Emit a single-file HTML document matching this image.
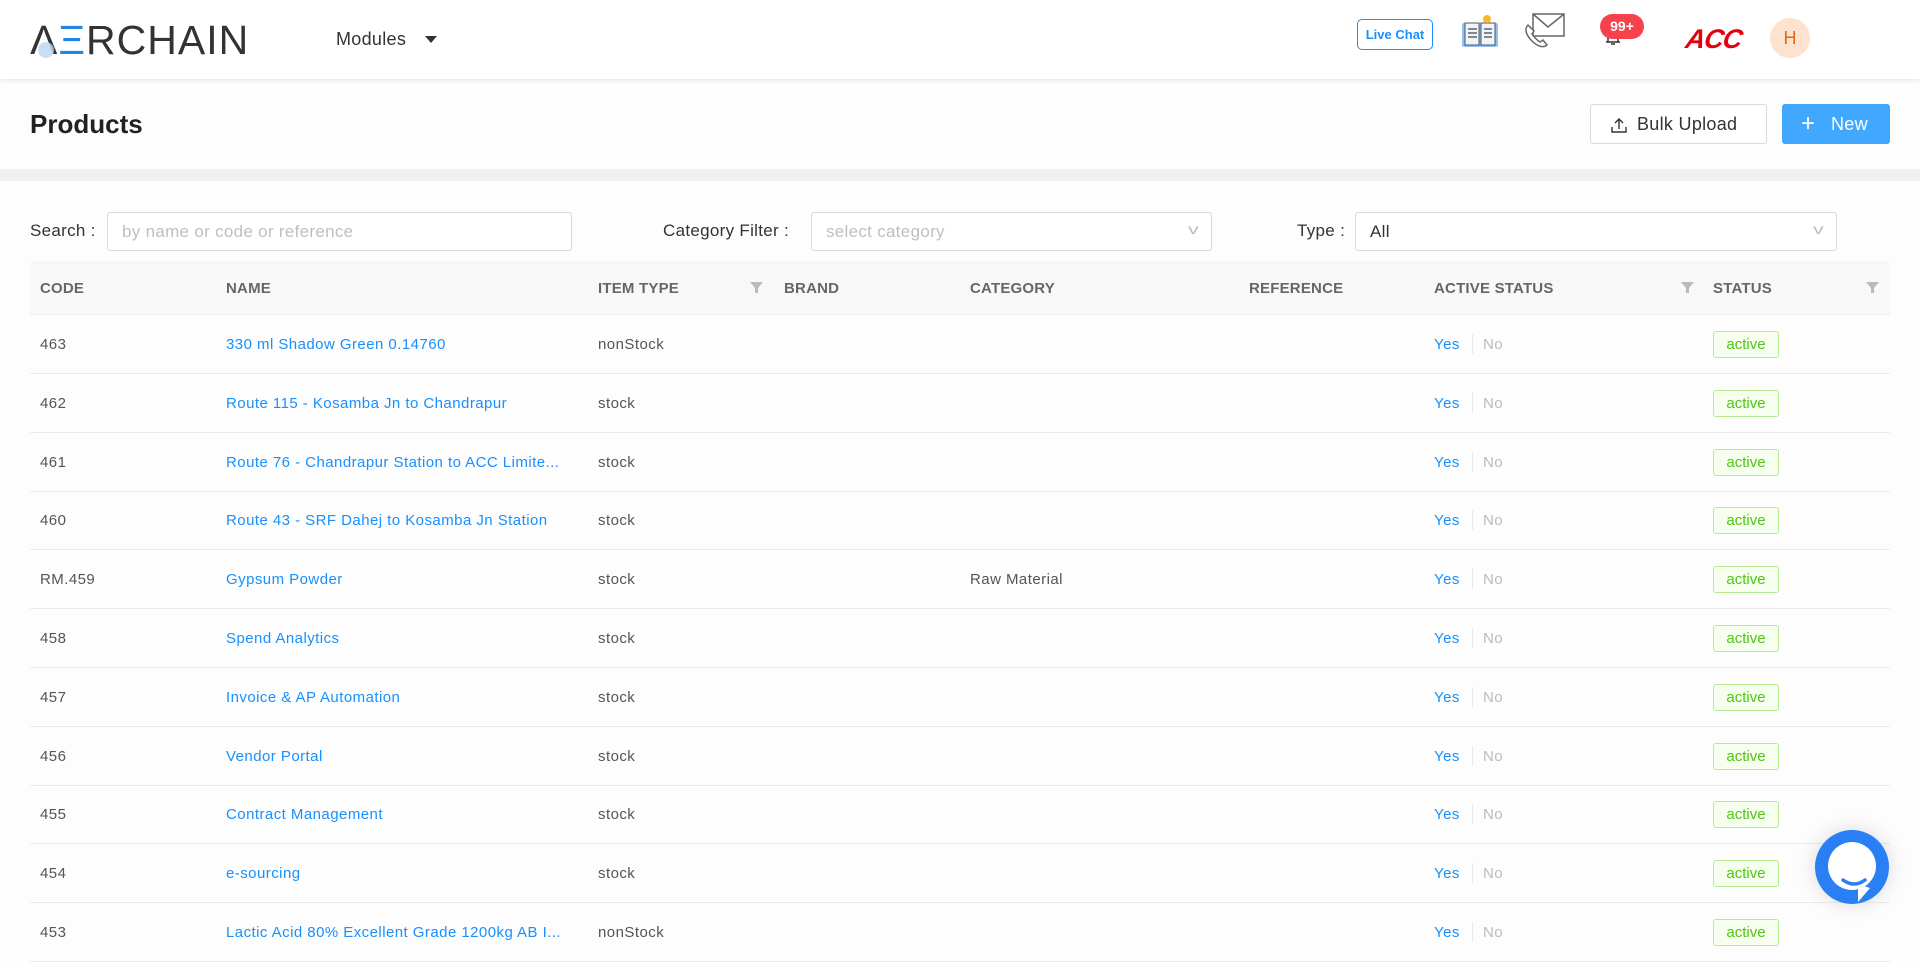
<!DOCTYPE html>
<html><head><meta charset="utf-8"><style>
*{box-sizing:border-box;margin:0;padding:0}
body{width:1920px;height:936px;overflow:hidden;background:#fdfdfd;font-family:"Liberation Sans",sans-serif;color:#333;position:relative}
.hdr{position:absolute;left:0;top:0;width:1920px;height:79px;background:#fff;box-shadow:0 2px 4px rgba(0,0,0,.08)}
.abs{position:absolute}
.band{position:absolute;left:0;top:169px;width:1920px;height:12px;background:#f0f0f0}
.lbl{position:absolute;font-size:17px;color:#333;top:221px;letter-spacing:.3px}
.inp{position:absolute;top:212px;height:39px;border:1px solid #d9d9d9;border-radius:3px;background:#fff;font-size:17px;padding:9px 14px;color:#bfbfbf;letter-spacing:.3px}
.chev{position:absolute;right:14px;top:8px;color:#bbb;font-size:14px;transform:scaleX(1.5)}
.th{position:absolute;left:30px;top:261px;width:1860px;height:54px;background:#f8f8f9;border-bottom:1px solid #eee}
.th span{position:absolute;top:19px;font-size:15px;font-weight:bold;color:#666;letter-spacing:.2px}
.row{position:absolute;left:30px;width:1860px;height:59px;border-bottom:1px solid #ececec}
.row span{position:absolute;top:21px;font-size:15px;color:#555;letter-spacing:.45px}
.row .nm{color:#1890ff}
.tag{position:absolute;left:1683px;top:16px;width:66px;height:27px;border:1px solid #b7eb8f;background:#f6ffed;color:#52c41a;border-radius:3px;font-size:15px;text-align:center;line-height:25px}
.fi{position:absolute;top:20px;width:13px;height:13px}
</style></head><body>
<div class="hdr">
  <div class="abs" style="left:30px;top:20px;font-size:41px;letter-spacing:1px;color:#333;line-height:40px">Λ<span style="color:#1e88e5">Ξ</span>RCHAIN</div>
  <div class="abs" style="left:38px;top:42px;width:16px;height:16px;border-radius:50%;background:#bcd6f2;opacity:.8"></div>
  <div class="abs" style="left:336px;top:29px;font-size:18px;color:#333;letter-spacing:.3px">Modules</div>
  <div class="abs" style="left:425px;top:36px;width:0;height:0;border-left:6px solid transparent;border-right:6px solid transparent;border-top:7px solid #333"></div>
  <div class="abs" style="left:1357px;top:19px;width:76px;height:31px;border:1px solid #1890ff;border-radius:5px;color:#1890ff;font-size:13px;font-weight:bold;text-align:center;line-height:29px">Live Chat</div>
  <svg class="abs" style="left:1460px;top:11px" width="40" height="38" viewBox="0 0 40 38"><rect x="2" y="12" width="36" height="24" rx="2" fill="#8fc1f5"/><path d="M5 12h14v22H5z M21 12h14v22H21z" fill="#eef5fd" stroke="#555" stroke-width="1"/><path d="M8 18h9M8 22h9M8 26h9M24 18h8M24 22h8M24 26h8" stroke="#444" stroke-width="1.3"/><circle cx="27" cy="8" r="4" fill="#f5b82e"/></svg>
  <svg class="abs" style="left:1524px;top:13px" width="42" height="36" viewBox="0 0 42 36"><rect x="9" y="1" width="31" height="22" fill="#fff" stroke="#666" stroke-width="1.5"/><path d="M9 1l15 13 16-13" fill="none" stroke="#666" stroke-width="1.5"/><path d="M4 12c-4 4-2 10 4 16 6 6 12 7 15 4l-4-5-3 2c-3-2-6-5-8-8l2-3-5-5z" fill="#fff" stroke="#666" stroke-width="1.5"/></svg>
  <svg class="abs" style="left:1605px;top:28px" width="16" height="20" viewBox="0 0 16 20"><path d="M3 14V8a5 5 0 0110 0v6h2H1z M6 16h4" fill="none" stroke="#333" stroke-width="1.5"/></svg>
  <div class="abs" style="left:1600px;top:14px;width:44px;height:25px;border-radius:13px;background:#f5424d;color:#fff;font-size:14px;font-weight:bold;text-align:center;line-height:25px">99+</div>
  <div class="abs" style="left:1686px;top:24px;font-size:27px;font-weight:bold;font-style:italic;color:#e3000f;letter-spacing:-1px;transform:skewX(-10deg)">ACC</div>
  <div class="abs" style="left:1770px;top:18px;width:40px;height:40px;border-radius:50%;background:#fde3cf;color:#e06a1b;font-size:18px;text-align:center;line-height:40px">H</div>
</div>
<div class="abs" style="left:30px;top:109px;font-size:26px;font-weight:bold;color:#222">Products</div>
<div class="abs" style="left:1590px;top:104px;width:177px;height:40px;border:1px solid #d9d9d9;border-radius:3px;background:#fff;font-size:18px;line-height:38px;padding-left:46px;color:#333;letter-spacing:.3px">Bulk Upload</div>
<svg class="abs" style="left:1611px;top:117px" width="16" height="16" viewBox="0 0 16 16"><path d="M8 12V2M4 6l4-4 4 4M1 10v5h14v-5" fill="none" stroke="#333" stroke-width="1.4"/></svg>
<div class="abs" style="left:1782px;top:104px;width:108px;height:40px;border-radius:3px;background:#40a9ff;color:#fff;font-size:18px;line-height:40px;padding-left:49px;letter-spacing:.3px">New</div>
<div class="abs" style="left:1801px;top:112px;color:#fff;font-size:24px;line-height:24px">+</div>
<div class="band"></div>
<div class="lbl" style="left:30px">Search :</div>
<div class="inp" style="left:107px;width:465px">by name or code or reference</div>
<div class="lbl" style="left:663px">Category Filter :</div>
<div class="inp" style="left:811px;width:401px">select category<span class="chev">v</span></div>
<div class="lbl" style="left:1297px">Type :</div>
<div class="inp" style="left:1355px;width:482px;color:#333">All<span class="chev">v</span></div>
<div class="th">
<span style="left:10px">CODE</span><span style="left:196px">NAME</span><span style="left:568px">ITEM TYPE</span><span style="left:754px">BRAND</span><span style="left:940px">CATEGORY</span><span style="left:1219px">REFERENCE</span><span style="left:1404px">ACTIVE STATUS</span><span style="left:1683px">STATUS</span>
<svg class="fi" style="left:720px" viewBox="0 0 13 13"><path d="M0 1h13L8 7v5H5V7z" fill="#bbb"/></svg>
<svg class="fi" style="left:1651px" viewBox="0 0 13 13"><path d="M0 1h13L8 7v5H5V7z" fill="#bbb"/></svg>
<svg class="fi" style="left:1836px" viewBox="0 0 13 13"><path d="M0 1h13L8 7v5H5V7z" fill="#bbb"/></svg>
</div>
<div id="rows"></div>
<script>
var d=[["463","330 ml Shadow Green 0.14760","nonStock",""],["462","Route 115 - Kosamba Jn to Chandrapur","stock",""],["461","Route 76 - Chandrapur Station to ACC Limite...","stock",""],["460","Route 43 - SRF Dahej to Kosamba Jn Station","stock",""],["RM.459","Gypsum Powder","stock","Raw Material"],["458","Spend Analytics","stock",""],["457","Invoice &amp; AP Automation","stock",""],["456","Vendor Portal","stock",""],["455","Contract Management","stock",""],["454","e-sourcing","stock",""],["453","Lactic Acid 80% Excellent Grade 1200kg AB I...","nonStock",""]];
var h="";d.forEach(function(r,i){h+='<div class="row" style="top:'+(315+i*58.8)+'px"><span style="left:10px">'+r[0]+'</span><span class="nm" style="left:196px">'+r[1]+'</span><span style="left:568px">'+r[2]+'</span><span style="left:940px">'+r[3]+'</span><span style="left:1404px;color:#1890ff">Yes</span><span style="left:1442px;top:19px;width:1px;height:20px;background:#e8e8e8"></span><span style="left:1453px;color:#bbb">No</span><div class="tag">active</div></div>';});
document.getElementById("rows").innerHTML=h;
</script>
<div class="abs" style="left:1815px;top:830px;width:74px;height:74px;border-radius:50%;background:#2a7ff5;box-shadow:0 0 20px rgba(0,0,0,.15)"></div>
<div class="abs" style="left:1828px;top:842px;width:48px;height:48px;border-radius:50%;background:#fff"></div>
<svg class="abs" style="left:1830px;top:850px" width="50" height="55" viewBox="0 0 50 55"><path d="M28 34l0 18 12-14z" fill="#fff"/><path d="M13 30q11 8 22 0" fill="none" stroke="#2a7ff5" stroke-width="3.5" stroke-linecap="round"/></svg>
</body></html>
